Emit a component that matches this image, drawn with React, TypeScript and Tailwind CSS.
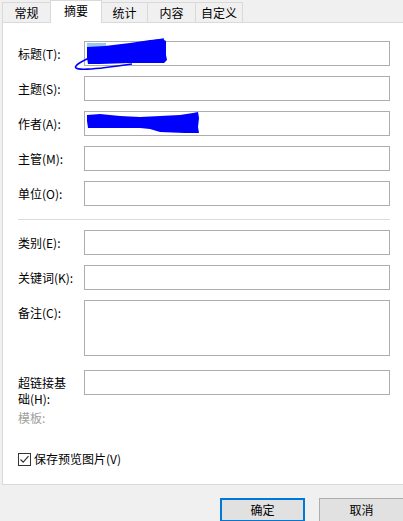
import React from 'react';

const tabs = [
  { label: '常规', w: 'w-[49px]' },
  { label: '摘要', w: 'w-[52px]', active: true },
  { label: '统计', w: 'w-[47px]' },
  { label: '内容', w: 'w-[49px]' },
  { label: '自定义', w: 'w-[48px]' },
];

function Field({ label, tall, narrow }: { label: string; tall?: boolean; narrow?: boolean }) {
  return (
    <div className={`flex items-start ${tall ? 'h-[56px]' : 'h-[25px]'}`}>
      <div className={`w-[66px] shrink-0 pt-[5px] leading-[16px] ${narrow ? 'pr-[12px]' : ''}`}>{label}</div>
      <div className={`w-[306px] ${tall ? 'h-[56px]' : 'h-[25px]'} border border-[#adadad] bg-white`} />
    </div>
  );
}

export default function App() {
  return (
    <div className="relative w-[403px] h-[521px] overflow-hidden bg-[#f0f0f0] text-[12px] text-black font-['Noto_Sans_CJK_SC','Microsoft_YaHei',sans-serif]">
      {/* Tab strip */}
      <div className="flex items-end h-[22px] pl-[2px]">
        {tabs.map((t, i) => (
          <div
            key={t.label}
            className={`${t.w} ${i > 0 ? '-ml-px' : ''} flex justify-center border-l border-t border-r border-[#d9d9d9] ${
              t.active
                ? 'relative z-10 h-[23px] -mb-px bg-white pt-[2px] items-start'
                : 'h-[20px] bg-[#f0f0f0] items-center'
            }`}
          >
            <span className="leading-[16px]">{t.label}</span>
          </div>
        ))}
      </div>

      {/* Panel */}
      <div className="ml-[2px] -mr-[10px] h-[463px] border border-[#d9d9d9] bg-white pl-[15px] pt-[18px]">
        <div className="flex flex-col gap-[10px]">
          <Field label="标题(T):" />
          <Field label="主题(S):" />
          <Field label="作者(A):" />
          <Field label="主管(M):" />
          <Field label="单位(O):" />
        </div>
        <div className="w-[372px] h-px bg-[#dcdcdc] mt-[13px] mb-[10px]" />
        <div className="flex flex-col gap-[10px]">
          <Field label="类别(E):" />
          <Field label="关键词(K):" />
          <Field label="备注(C):" tall />
        </div>
        <div className="mt-[14px]">
          <Field label="超链接基础(H):" narrow />
        </div>
        <div className="mt-[15px] leading-[16px] text-[#a0a0a0]">模板:</div>
        <label className="mt-[25px] flex items-center gap-[3px] leading-[16px]">
          <span className="w-[13px] h-[13px] border border-[#333333] bg-white flex items-center justify-center">
            <svg width="11" height="11" viewBox="0 0 11 11">
              <path d="M1.5 5.5 L4.2 8.2 L9.5 2.2" fill="none" stroke="#333333" strokeWidth="1.2" />
            </svg>
          </span>
          <span>保存预览图片(V)</span>
        </label>
      </div>

      {/* Buttons */}
      <div className="flex justify-end gap-[14px] pt-[13px] -mr-px">
        <button className="w-[85px] h-[24px] border-2 border-[#0078d7] bg-[#e1e1e1] leading-[16px]">确定</button>
        <button className="w-[85px] h-[24px] border border-[#adadad] bg-[#e1e1e1] leading-[16px]">取消</button>
      </div>

      {/* Redaction scribbles */}
      <svg className="absolute left-0 top-0 pointer-events-none" width="403" height="521">
        <rect x="87" y="43" width="19" height="4" fill="#99c9ef" />
        <path
          d="M87 47 L105 46 L130 43 L150 40 L162 39 L166 41 L166 55 L167 60 L164 63 L130 63 L100 64 L88 64 L87 58 Z"
          fill="#0000ff"
        />
        <path
          d="M164 39 C128 44, 82 58, 76 66 C72 71, 92 70, 132 64"
          fill="none"
          stroke="#0000ff"
          strokeWidth="1.6"
        />
        <path
          d="M87 115 L100 114 L120 116 L140 117 L160 116 L180 115 L193 113 L198 112 L199 118 L198 127 L199 133 L185 133 L160 132 L150 129 L140 128 L120 128 L100 128 L88 128 L87 121 Z"
          fill="#0000ff"
        />
      </svg>
    </div>
  );
}
